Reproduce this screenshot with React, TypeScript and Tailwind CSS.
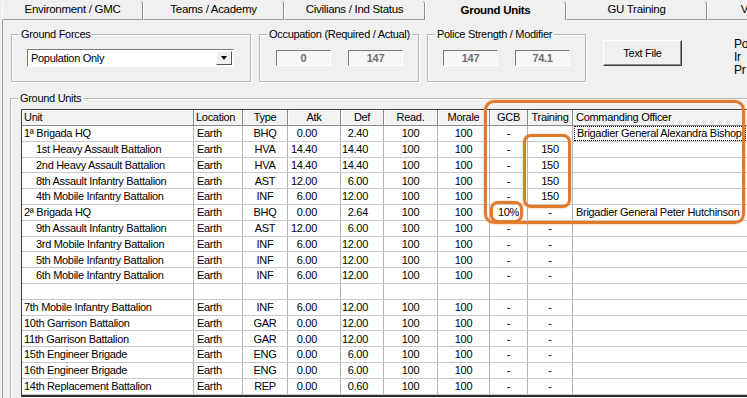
import React from "react";

type Row = {
  unit: string;
  indent?: boolean;
  type?: string;
  atk?: string;
  def?: string;
  gcb?: string;
  training?: string;
  officer?: string;
  empty?: boolean;
};

const rows: Row[] = [
  { unit: "1ª Brigada HQ", type: "BHQ", atk: "0.00", def: "2.40", gcb: "-", training: "", officer: "Brigadier General Alexandra Bishop" },
  { unit: "1st Heavy Assault Battalion", indent: true, type: "HVA", atk: "14.40", def: "14.40", gcb: "-", training: "150" },
  { unit: "2nd Heavy Assault Battalion", indent: true, type: "HVA", atk: "14.40", def: "14.40", gcb: "-", training: "150" },
  { unit: "8th Assault Infantry Battalion", indent: true, type: "AST", atk: "12.00", def: "6.00", gcb: "-", training: "150" },
  { unit: "4th Mobile Infantry Battalion", indent: true, type: "INF", atk: "6.00", def: "12.00", gcb: "-", training: "150" },
  { unit: "2ª Brigada HQ", type: "BHQ", atk: "0.00", def: "2.64", gcb: "10%", training: "-", officer: "Brigadier General Peter Hutchinson" },
  { unit: "9th Assault Infantry Battalion", indent: true, type: "AST", atk: "12.00", def: "6.00", gcb: "-", training: "-" },
  { unit: "3rd Mobile Infantry Battalion", indent: true, type: "INF", atk: "6.00", def: "12.00", gcb: "-", training: "-" },
  { unit: "5th Mobile Infantry Battalion", indent: true, type: "INF", atk: "6.00", def: "12.00", gcb: "-", training: "-" },
  { unit: "6th Mobile Infantry Battalion", indent: true, type: "INF", atk: "6.00", def: "12.00", gcb: "-", training: "-" },
  { unit: "", empty: true },
  { unit: "7th Mobile Infantry Battalion", type: "INF", atk: "6.00", def: "12.00", gcb: "-", training: "-" },
  { unit: "10th Garrison Battalion", type: "GAR", atk: "0.00", def: "12.00", gcb: "-", training: "-" },
  { unit: "11th Garrison Battalion", type: "GAR", atk: "0.00", def: "12.00", gcb: "-", training: "-" },
  { unit: "15th Engineer Brigade", type: "ENG", atk: "0.00", def: "6.00", gcb: "-", training: "-" },
  { unit: "16th Engineer Brigade", type: "ENG", atk: "0.00", def: "6.00", gcb: "-", training: "-" },
  { unit: "14th Replacement Battalion", type: "REP", atk: "0.00", def: "0.60", gcb: "-", training: "-" },
];

const tabs = ["Environment / GMC", "Teams / Academy", "Civilians / Ind Status", "Ground Units", "GU Training", "V"];

function ReadBox({ value }: { value: string }) {
  return (
    <div className="w-[55px] h-[16px] bg-[#f7f7f7] border-t border-l border-[#7a7a7a] border-b border-r border-b-white border-r-white flex items-center justify-center font-bold text-[#6e6e6e]">
      {value}
    </div>
  );
}

function Group({ label, className, children }: { label: string; className: string; children?: React.ReactNode }) {
  return (
    <fieldset className={`shrink-0 border border-[#b8b8b8] shadow-[inset_1px_1px_0_#fff,1px_1px_0_#fff] ${className}`}>
      <legend className="ml-[7px] px-[2px] leading-[13px] whitespace-nowrap">{label}</legend>
      {children}
    </fieldset>
  );
}

const headCell = "h-full flex items-center border-r border-[#8a8a8a] shadow-[inset_1px_1px_0_#fff] shrink-0";
const bodyCell = "h-full flex items-center border-r border-[#b4b4b4] shrink-0";

export default function App() {
  return (
    <div className="relative w-[747px] h-[398px] overflow-hidden bg-[#f0f0f0] text-black text-[11px] tracking-[-0.3px] font-['Liberation_Sans',Arial,sans-serif]">
      {/* tab strip */}
      <div className="flex h-[20px] pl-[2px] text-[11.5px] pt-[1px]">
        {tabs.map((t, i) => {
          const active = t === "Ground Units";
          const last = i === tabs.length - 1;
          return (
            <div
              key={t}
              className={`${last ? "w-[75px]" : "w-[141px]"} shrink-0 flex items-center justify-center border-l border-l-white border-r border-r-[#8c8c8c] rounded-t-[3px] bg-[#f0f0f0] ${
                active ? "font-bold" : "border-b border-b-[#a0a0a0]"
              } ${i === 0 ? "border-l-[#9a9a9a]" : ""}`}
            >
              {t}
            </div>
          );
        })}
      </div>

      {/* tab page */}
      <div className="ml-[2px] h-[378px] border-l border-[#9a9a9a]">
        <div className="flex items-start pt-[8px] pl-[8px] gap-[8px]">
          <Group label="Ground Forces" className="w-[240px] h-[54px]">
            <div className="pl-[15px] pt-[8px]">
              <div className="w-[207px] h-[18px] bg-white border-t border-l border-[#7a7a7a] border-b border-r border-b-white border-r-white flex items-center">
                <span className="pl-[3px] flex-1">Population Only</span>
                <div className="w-[16px] h-[14px] mr-[1px] bg-[#f0f0f0] border border-t-white border-l-white border-b-[#555] border-r-[#555] flex items-center justify-center">
                  <div className="w-0 h-0 border-l-[3.5px] border-r-[3.5px] border-t-[4px] border-l-transparent border-r-transparent border-t-black" />
                </div>
              </div>
            </div>
          </Group>
          <Group label="Occupation (Required / Actual)" className="w-[160px] h-[54px]">
            <div className="flex gap-[17px] pl-[16px] pt-[9px]">
              <ReadBox value="0" />
              <ReadBox value="147" />
            </div>
          </Group>
          <Group label="Police Strength / Modifier" className="w-[159px] h-[54px]">
            <div className="flex gap-[17px] pl-[15px] pt-[9px]">
              <ReadBox value="147" />
              <ReadBox value="74.1" />
            </div>
          </Group>
          <button
            type="button"
            className="shrink-0 ml-[9px] mt-[12px] w-[79px] h-[26px] bg-[#f0f0f0] border border-t-white border-l-white border-b-[#404040] border-r-[#404040] shadow-[inset_-1px_-1px_0_#8a8a8a]"
          >
            Text File
          </button>
          <div className="shrink-0 ml-[44px] mt-[10px] w-[14px] overflow-hidden leading-[13px] whitespace-nowrap text-[12px]">
            <div>Po</div>
            <div>Ir</div>
            <div>Pr</div>
          </div>
        </div>

        {/* ground units */}
        <fieldset className="ml-[7px] mt-[10px] w-[800px] h-[320px] border border-[#b8b8b8] shadow-[inset_1px_1px_0_#fff]">
          <legend className="ml-[7px] px-[2px] leading-[13px]">Ground Units</legend>
          <div className="pl-[10px] pt-[4px]">
            <div className="w-[780px] border-t border-l border-[#404040] bg-white">
              <div className="flex h-[16px] bg-[#f3f3f3] border-b border-[#8a8a8a]">
                <div className={`${headCell} w-[172px] pl-[2px]`}>Unit</div>
                <div className={`${headCell} w-[49px] pl-[2px]`}>Location</div>
                <div className={`${headCell} w-[45px] justify-center`}>Type</div>
                <div className={`${headCell} w-[53px] justify-center`}>Atk</div>
                <div className={`${headCell} w-[43px] justify-center`}>Def</div>
                <div className={`${headCell} w-[54px] justify-center`}>Read.</div>
                <div className={`${headCell} w-[52px] justify-center`}>Morale</div>
                <div className={`${headCell} w-[38px] justify-center`}>GCB</div>
                <div className={`${headCell} w-[45px] justify-center`}>Training</div>
                <div className={`${headCell} w-[200px] pl-[3px]`}>Commanding Officer</div>
              </div>
              {rows.map((r, i) => (
                <div key={i} className="flex h-[15.8px] border-b border-[#c8c8c8]">
                  <div className={`${bodyCell} w-[172px] ${r.indent ? "pl-[14px]" : "pl-[2px]"}`}>{r.unit}</div>
                  <div className={`${bodyCell} w-[49px] pl-[3px]`}>{r.empty ? "" : "Earth"}</div>
                  <div className={`${bodyCell} w-[45px] justify-center`}>{r.type}</div>
                  <div className={`${bodyCell} w-[53px] justify-end pr-[23px]`}>{r.atk}</div>
                  <div className={`${bodyCell} w-[43px] justify-end pr-[15px]`}>{r.def}</div>
                  <div className={`${bodyCell} w-[54px] justify-center`}>{r.empty ? "" : "100"}</div>
                  <div className={`${bodyCell} w-[52px] justify-center`}>{r.empty ? "" : "100"}</div>
                  <div className={`${bodyCell} w-[38px] justify-center`}>{r.gcb}</div>
                  <div className={`${bodyCell} w-[45px] justify-center`}>{r.training}</div>
                  <div className="h-full flex items-center shrink-0 w-[200px] pl-[1px]">
                    {r.officer && (
                      <span className={`h-full flex items-center pl-[2px] w-[172px] ${i === 0 ? "border border-dotted border-black" : ""}`}>
                        {r.officer}
                      </span>
                    )}
                  </div>
                </div>
              ))}
              <div className="h-[2px] bg-[#303030]" />
            </div>
          </div>
        </fieldset>
      </div>

      {/* highlight marks */}
      <div className="absolute left-[484px] top-[100px] w-[261px] h-[124px] border-[3px] border-[#e07a2c] rounded-[10px] shadow-[0_0_2px_#f2a867]" />
      <div className="absolute left-[523px] top-[134px] w-[48px] h-[74px] border-[3px] border-[#e07a2c] rounded-[8px] shadow-[0_0_2px_#f2a867]" />
      <div className="absolute left-[490px] top-[201px] w-[33px] h-[22px] border-[3px] border-[#e07a2c] rounded-[8px] shadow-[0_0_2px_#f2a867]" />
    </div>
  );
}
